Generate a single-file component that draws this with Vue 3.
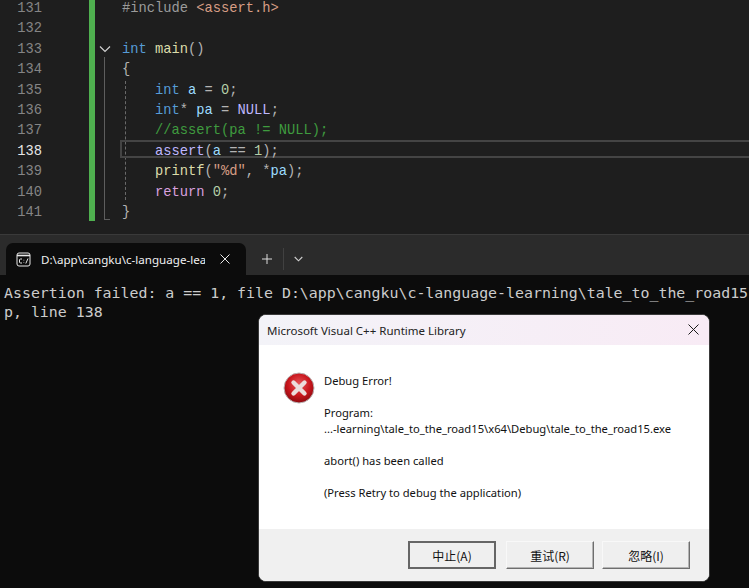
<script setup>
const lineNumbers = [131, 132, 133, 134, 135, 136, 137, 138, 139, 140, 141]
const messages = [
  'Debug Error!',
  '',
  'Program:',
  '...-learning\\tale_to_the_road15\\x64\\Debug\\tale_to_the_road15.exe',
  '',
  'abort() has been called',
  '',
  '(Press Retry to debug the application)'
]
const buttons = [
  { label: '中止(A)', primary: true },
  { label: '重试(R)', primary: false },
  { label: '忽略(I)', primary: false }
]
</script>

<template>
  <div class="page">
    <section class="editor">
      <div class="numbers">
        <div v-for="n in lineNumbers" :key="n" class="num" :class="{ current: n === 138 }">{{ n }}</div>
      </div>
      <div class="changebar"></div>
      <div class="fold">
        <svg class="chevron" width="12" height="8" viewBox="0 0 12 8"><path d="M1 1.5 6 6.5 11 1.5" fill="none" stroke="#d0d0d0" stroke-width="1.2" /></svg>
        <div class="foldline"></div>
      </div>
      <div class="code">
        <div class="guide"></div>
        <div class="curline"></div>
        <div class="ln"><span class="mac">#include </span><span class="str">&lt;assert.h&gt;</span></div>
        <div class="ln"></div>
        <div class="ln"><span class="kw">int</span> <span class="fn">main</span><span class="pn">()</span></div>
        <div class="ln"><span class="pn">{</span></div>
        <div class="ln in"><span class="kw">int</span> <span class="var">a</span> <span class="pn">=</span> <span class="nm">0</span><span class="pn">;</span></div>
        <div class="ln in"><span class="kw">int</span><span class="pn">*</span> <span class="var">pa</span> <span class="pn">=</span> <span class="nul">NULL</span><span class="pn">;</span></div>
        <div class="ln in"><span class="cm">//assert(pa != NULL);</span></div>
        <div class="ln in"><span class="nul">assert</span><span class="pn">(</span><span class="var">a</span> <span class="pn">==</span> <span class="nm">1</span><span class="pn">);</span></div>
        <div class="ln in"><span class="fn">printf</span><span class="pn">(</span><span class="str">"%d"</span><span class="pn">, *</span><span class="var">pa</span><span class="pn">);</span></div>
        <div class="ln in"><span class="ret">return</span> <span class="nm">0</span><span class="pn">;</span></div>
        <div class="ln"><span class="pn">}</span></div>
      </div>
    </section>

    <div class="tabstrip">
      <div class="tab">
        <svg class="tabicon" width="15" height="15" viewBox="0 0 15 15">
          <rect x="1" y="1" width="13" height="13" rx="2" fill="none" stroke="#e8e8e8" stroke-width="1" />
          <path d="M1 3.5h13" stroke="#e8e8e8" stroke-width="1.6" />
          <path d="M6 7H4.2L3.5 7.7V10.3L4.2 11H6M7.6 8.2h.6M7.6 10.4h.6M12 6.5 9.8 11.5" fill="none" stroke="#e8e8e8" stroke-width="1" />
        </svg>
        <div class="tabtitle">D:\app\cangku\c-language-lea</div>
        <svg class="tabclose" width="10" height="10" viewBox="0 0 10 10"><path d="M.5.5l9 9M9.5.5l-9 9" stroke="#e8e8e8" stroke-width="1" /></svg>
      </div>
      <svg class="plus" width="12" height="12" viewBox="0 0 12 12"><path d="M6 1v10M1 6h10" stroke="#dcdcdc" stroke-width="1" /></svg>
      <div class="sep"></div>
      <svg class="drop" width="9" height="6" viewBox="0 0 9 6"><path d="M.7 1l3.8 3.8L8.3 1" fill="none" stroke="#cfcfcf" stroke-width="1.1" /></svg>
    </div>

    <section class="terminal">
      <div class="termtext">Assertion failed: a == 1, file D:\app\cangku\c-language-learning\tale_to_the_road15</div>
      <div class="termtext">p, line 138</div>
    </section>

    <div class="dialog">
      <header class="titlebar">
        <span>Microsoft Visual C++ Runtime Library</span>
        <svg class="dlgclose" width="11" height="11" viewBox="0 0 11 11"><path d="M.5.5l10 10M10.5.5l-10 10" stroke="#1a1a1a" stroke-width="1" /></svg>
      </header>
      <div class="body">
        <svg class="erricon" width="32" height="32" viewBox="0 0 32 32">
          <defs>
            <radialGradient id="red" cx="50%" cy="38%" r="62%">
              <stop offset="0%" stop-color="#e8565a" />
              <stop offset="60%" stop-color="#c8151c" />
              <stop offset="100%" stop-color="#8c0a10" />
            </radialGradient>
          </defs>
          <circle cx="16" cy="16" r="15" fill="url(#red)" stroke="#b9b3b3" stroke-width="1" />
          <path d="M10.5 10.5 21.5 21.5M21.5 10.5 10.5 21.5" stroke="#ecdcdc" stroke-width="4.4" stroke-linecap="round" />
        </svg>
        <div class="msg">
          <div v-for="(m, i) in messages" :key="i" class="msgline">{{ m }}</div>
        </div>
      </div>
      <footer class="footer">
        <button v-for="b in buttons" :key="b.label" class="btn" :class="{ primary: b.primary }">{{ b.label }}</button>
      </footer>
    </div>
  </div>
</template>

<style>
html, body { margin: 0; background: #0c0c0c; }
</style>

<style scoped>
.page {
  position: relative;
  width: 749px;
  height: 588px;
  overflow: hidden;
  background: #0c0c0c;
}
.editor {
  display: flex;
  height: 234px;
  background: #1e1e1e;
  border-bottom: 1px solid #3a3a3a;
  overflow: hidden;
  font-family: "Liberation Mono", monospace;
  font-size: 13.75px;
  white-space: pre;
}
.numbers {
  width: 42px;
  margin-top: -1px;
  text-align: right;
  color: #858585;
}
.num, .ln { height: 20.4px; line-height: 20.4px; }
.num.current { color: #e6e6e6; }
.changebar {
  width: 6px;
  height: 221px;
  margin-left: 47px;
  background: #4fb04f;
}
.fold {
  position: relative;
  width: 27px;
  height: 221px;
}
.chevron { position: absolute; left: 4px; top: 45px; }
.foldline {
  position: absolute;
  left: 9px;
  top: 57px;
  width: 6px;
  height: 163px;
  border-left: 1px solid #5e5e5e;
  border-bottom: 1px solid #5e5e5e;
  box-sizing: border-box;
}
.code {
  position: relative;
  flex: 1;
  margin-top: -1px;
  color: #dcdcdc;
}
.guide {
  position: absolute;
  left: 3px;
  top: 82px;
  height: 119px;
  border-left: 1px dashed #6a6a6a;
}
.curline {
  position: absolute;
  left: -2px;
  right: -4px;
  top: 141px;
  height: 14px;
  border: 2px solid #444;
}
.ln { position: relative; }
.ln.in { padding-left: 33px; }
.kw { color: #569cd6; }
.fn { color: #dcdcaa; }
.var { color: #9cdcfe; }
.pn { color: #b4b4b4; }
.nm { color: #b5cea8; }
.nul { color: #beb7ff; }
.cm { color: #3f9b3f; }
.ret { color: #d8a0df; }
.str { color: #d69d85; }
.mac { color: #9b9b9b; }

.tabstrip {
  display: flex;
  align-items: center;
  height: 40px;
  box-sizing: border-box;
  padding: 8px 0 0 6px;
  background: #2b2b2b;
}
.tab {
  display: flex;
  align-items: center;
  width: 240px;
  height: 32px;
  box-sizing: border-box;
  padding-left: 10px;
  background: #0c0c0c;
  border-radius: 7px 7px 0 0;
  color: #f0f0f0;
  font-family: "Noto Sans", sans-serif;
  font-size: 11.6px;
}
.tabicon { flex: none; }
.tabtitle {
  width: 164px;
  margin-left: 10px;
  overflow: hidden;
  white-space: nowrap;
}
.tabclose { margin-left: 15px; flex: none; }
.plus { margin-left: 15px; }
.sep { width: 1px; height: 22px; margin-left: 10px; background: #414141; }
.drop { margin-left: 10px; }

.terminal {
  padding: 9px 0 0 4px;
  font-family: "DejaVu Sans Mono", monospace;
  font-size: 14.9px;
  color: #cccccc;
}
.termtext { height: 19px; line-height: 19px; white-space: nowrap; }

.dialog {
  position: absolute;
  left: 258px;
  top: 314px;
  width: 452px;
  height: 268px;
  display: flex;
  flex-direction: column;
  box-sizing: border-box;
  border: 1px solid #3a3a3a;
  border-radius: 8px;
  overflow: hidden;
  background: #fff;
  font-family: "Noto Sans", sans-serif;
  font-size: 11.2px;
  color: #111;
}
.titlebar {
  display: flex;
  align-items: center;
  justify-content: space-between;
  height: 30px;
  flex: none;
  padding: 0 10px 0 8px;
  background: linear-gradient(90deg, #f3f3f8, #f8ebf5);
  font-size: 11.5px;
  color: #222;
}
.dlgclose { margin-bottom: 2px; }
.body {
  flex: 1;
  display: flex;
  padding: 27px 0 0 24px;
}
.erricon { flex: none; }
.msg { margin-left: 9px; margin-top: 1px; }
.msgline { height: 16px; line-height: 16px; white-space: nowrap; }
.footer {
  display: flex;
  justify-content: flex-end;
  gap: 8px;
  height: 52px;
  flex: none;
  box-sizing: border-box;
  padding: 12px 19px 0 0;
  background: #f0f0f0;
}
.btn {
  width: 88px;
  height: 28px;
  padding: 0;
  box-sizing: border-box;
  background: #efefef;
  border: 1px solid;
  border-color: #f8f8f8 #6e6e6e #6e6e6e #f8f8f8;
  box-shadow: inset -1px -1px 0 #b4b4b4;
  font-family: "Noto Sans CJK SC", "Noto Sans", sans-serif;
  font-size: 12px;
  color: #111;
}
.btn.primary {
  margin-right: 2px;
  border: 2px solid #666;
  box-shadow: none;
}
</style>
